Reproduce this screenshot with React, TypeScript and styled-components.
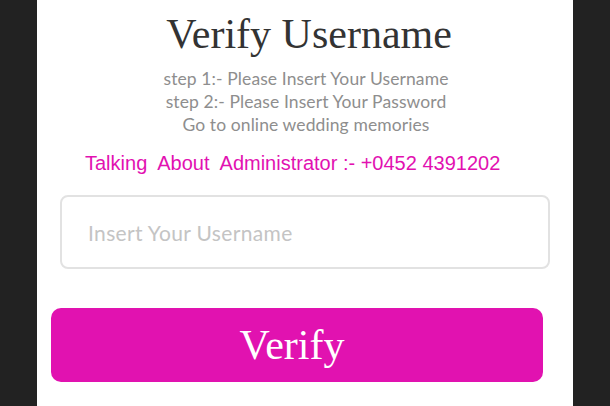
import React from "react";
import styled, { createGlobalStyle } from "styled-components";

const GlobalStyle = createGlobalStyle`
  html, body {
    margin: 0;
    padding: 0;
    background: #222222;
  }
  * { box-sizing: border-box; }
`;

const Page = styled.div`
  display: flex;
  justify-content: center;
  height: 406px;
  overflow: hidden;
  background: #222222;
`;

const Panel = styled.main`
  width: 536px;
  background: #ffffff;
  display: flex;
  flex-direction: column;
  padding-top: 11px;
`;

const Title = styled.h1`
  margin: 0;
  padding-left: 8px;
  font-family: "Liberation Serif", "Times New Roman", serif;
  font-weight: 400;
  font-size: 42px;
  line-height: 47px;
  color: #333333;
  text-align: center;
`;

const Steps = styled.div`
  margin-top: 9px;
  display: flex;
  flex-direction: column;
  align-items: center;
  padding-left: 2px;
  font-family: Lato, "Open Sans", sans-serif;
  font-size: 17.5px;
  letter-spacing: 0.1px;
  line-height: 23px;
  color: #8e8e8e;
`;

const Contact = styled.p`
  margin: 15px 0 0 48px;
  font-family: "Liberation Sans", Arial, sans-serif;
  font-size: 20px;
  line-height: 24px;
  color: #e211b1;
  white-space: pre;
`;

const Field = styled.input`
  margin: 20px 23px 0 23px;
  height: 74px;
  border: 2px solid #e2e2e2;
  border-radius: 8px;
  padding: 0 0 0 26px;
  font-family: Lato, "Open Sans", sans-serif;
  font-size: 21px;
  letter-spacing: 0.35px;
  color: #555555;
  outline: none;
  background: #ffffff;
  &::placeholder {
    color: #c4c4c4;
  }
`;

const VerifyButton = styled.button`
  margin: 39px 0 0 14px;
  width: 492px;
  height: 74px;
  padding: 0 10px 0 0;
  border: none;
  border-radius: 10px;
  background: #e112b0;
  color: #ffffff;
  font-family: "Liberation Serif", "Times New Roman", serif;
  font-size: 42px;
  cursor: pointer;
`;

export default function App() {
  return (
    <>
      <GlobalStyle />
      <Page>
        <Panel>
          <Title>Verify Username</Title>
          <Steps>
            <span>step 1:- Please Insert Your Username</span>
            <span>step 2:- Please Insert Your Password</span>
            <span>Go to online wedding memories</span>
          </Steps>
          <Contact>{"Talking  About  Administrator :- +0452 4391202"}</Contact>
          <Field placeholder="Insert Your Username" />
          <VerifyButton>Verify</VerifyButton>
        </Panel>
      </Page>
    </>
  );
}
